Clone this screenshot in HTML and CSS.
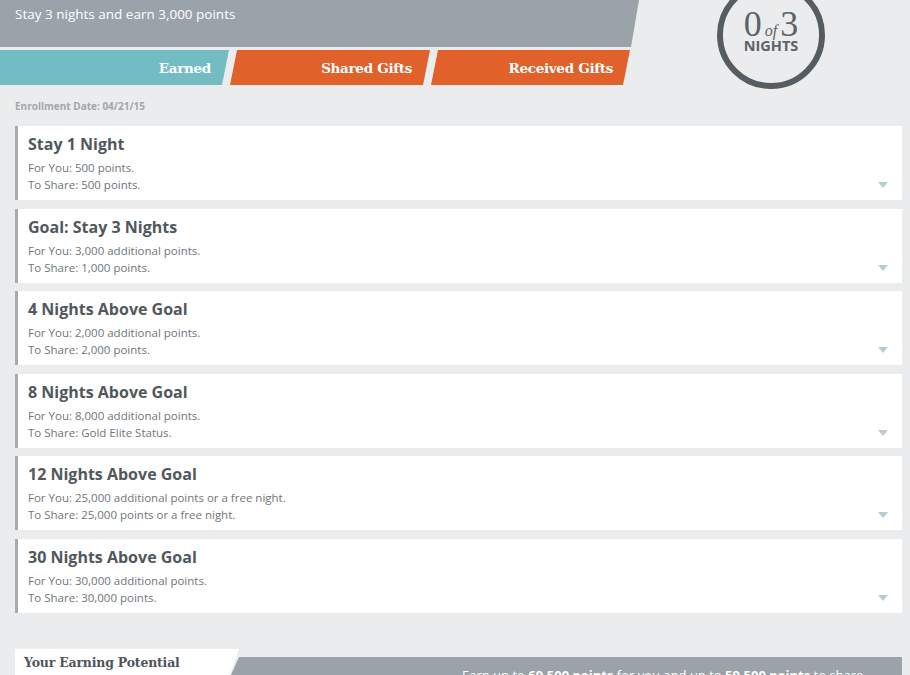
FILE: index.html
```html
<!DOCTYPE html>
<html>
<head>
<meta charset="utf-8">
<link rel="stylesheet" href="styles.css">
</head>
<body>
<div class="page">
  <header class="header">
    <div class="banner">
      <div class="subtitle">Stay 3 nights and earn 3,000 points</div>
    </div>
    <nav class="tabs">
      <div class="tab tab-earned">Earned</div>
      <div class="tab tab-shared">Shared Gifts</div>
      <div class="tab tab-received">Received Gifts</div>
    </nav>
    <div class="badge">
      <div class="badge-count"><span class="num">0</span><span class="of">of</span><span class="num">3</span></div>
      <div class="badge-label">NIGHTS</div>
    </div>
  </header>

  <div class="enroll">Enrollment Date: 04/21/15</div>

  <div class="cards">
    <div class="card">
      <div class="card-title">Stay 1 Night</div>
      <div class="card-line">For You: 500 points.</div>
      <div class="card-line">To Share: 500 points.</div>
      <span class="arrow"></span>
    </div>
    <div class="card">
      <div class="card-title">Goal: Stay 3 Nights</div>
      <div class="card-line">For You: 3,000 additional points.</div>
      <div class="card-line">To Share: 1,000 points.</div>
      <span class="arrow"></span>
    </div>
    <div class="card">
      <div class="card-title">4 Nights Above Goal</div>
      <div class="card-line">For You: 2,000 additional points.</div>
      <div class="card-line">To Share: 2,000 points.</div>
      <span class="arrow"></span>
    </div>
    <div class="card">
      <div class="card-title">8 Nights Above Goal</div>
      <div class="card-line">For You: 8,000 additional points.</div>
      <div class="card-line">To Share: Gold Elite Status.</div>
      <span class="arrow"></span>
    </div>
    <div class="card">
      <div class="card-title">12 Nights Above Goal</div>
      <div class="card-line">For You: 25,000 additional points or a free night.</div>
      <div class="card-line">To Share: 25,000 points or a free night.</div>
      <span class="arrow"></span>
    </div>
    <div class="card">
      <div class="card-title">30 Nights Above Goal</div>
      <div class="card-line">For You: 30,000 additional points.</div>
      <div class="card-line">To Share: 30,000 points.</div>
      <span class="arrow"></span>
    </div>
  </div>

  <section class="potential">
    <div class="potential-tab">Your Earning Potential</div>
    <div class="potential-bar">Earn up to <b>69,500 points</b> for you and up to <b>59,500 points</b> to share</div>
  </section>
</div>
</body>
</html>
```

FILE: styles.css
```css
* { box-sizing: border-box; }
html, body { margin: 0; padding: 0; }
body {
  background: #ebeced;
  font-family: "Open Sans", "Liberation Sans", sans-serif;
  width: 910px;
  height: 675px;
  overflow: hidden;
}
.page { position: relative; }

.header { position: relative; height: 86px; }
.banner {
  height: 47px;
  width: 640px;
  background: #99a3a9;
  clip-path: polygon(0 0, 639px 0, 631px 100%, 0 100%);
  padding: 5px 0 0 15px;
}
.subtitle {
  color: #ffffff;
  font-size: 13.5px;
  line-height: 18px;
  font-weight: 400;
}
.tabs {
  display: flex;
  margin-top: 3px;
  height: 35px;
}
.tab {
  height: 35px;
  color: #ffffff;
  font-family: "DejaVu Serif", "Liberation Serif", serif;
  font-weight: bold;
  font-size: 13.5px;
  line-height: 37px;
  text-align: right;
  letter-spacing: -0.3px;
}
.tab-earned {
  width: 229px;
  background: #74bcc4;
  clip-path: polygon(0 0, 229px 0, 222px 100%, 0 100%);
  padding-right: 18px;
}
.tab-shared {
  width: 202px;
  background: #e0612a;
  clip-path: polygon(8px 0, 201px 0, 194px 100%, 1px 100%);
  padding-right: 19px;
}
.tab-received {
  width: 201px;
  margin-left: -1px;
  background: #e0612a;
  clip-path: polygon(8px 0, 200px 0, 193px 100%, 1px 100%);
  padding-right: 18px;
}

.badge {
  position: absolute;
  left: 717px;
  top: -19px;
  width: 108px;
  height: 108px;
  border: 6px solid #555d62;
  border-radius: 50%;
  display: flex;
  flex-direction: column;
  align-items: center;
  justify-content: flex-end;
  padding-bottom: 30px;
  color: #5b6368;
}
.badge-count {
  font-family: "Liberation Serif", "DejaVu Serif", serif;
  line-height: 35px;
  height: 35px;
  display: flex;
  align-items: baseline;
  margin-bottom: -3px;
}
.badge-count .num { font-size: 36px; }
.badge-count .of { font-size: 16px; font-style: italic; margin: 0 3px; }
.badge-label {
  font-size: 14.5px;
  font-weight: 700;
  line-height: 14px;
}

.enroll {
  margin: 14px 0 0 15px;
  font-size: 10px;
  font-weight: 700;
  color: #a2a7aa;
  line-height: 12px;
}

.cards {
  margin: 14px 8px 0 15px;
  display: flex;
  flex-direction: column;
  gap: 8.6px;
}
.card {
  position: relative;
  height: 74px;
  background: #ffffff;
  border-left: 3px solid #a7abae;
  padding: 7px 0 0 10px;
}
.card-title {
  font-size: 16px;
  font-weight: 700;
  color: #51585c;
  line-height: 22px;
  margin-bottom: 4px;
}
.card-line {
  font-size: 11.5px;
  color: #6f7579;
  line-height: 17px;
  font-weight: 400;
}
.arrow {
  position: absolute;
  right: 14px;
  bottom: 12px;
  width: 0;
  height: 0;
  border-left: 5px solid transparent;
  border-right: 5px solid transparent;
  border-top: 6px solid #b8cbd3;
}

.potential {
  margin: 36px 8px 0 15px;
  display: flex;
  align-items: flex-end;
  height: 26px;
}
.potential-tab {
  width: 224px;
  height: 26px;
  background: #ffffff;
  clip-path: polygon(0 0, 224px 0, 215px 100%, 0 100%);
  font-family: "DejaVu Serif", "Liberation Serif", serif;
  font-weight: bold;
  font-size: 12.5px;
  letter-spacing: -0.2px;
  color: #4f565a;
  padding: 5px 0 0 9px;
  line-height: 18px;
  position: relative;
  z-index: 1;
}
.potential-bar {
  flex: 1;
  height: 18px;
  margin-left: -13px;
  background: #99a3a9;
  clip-path: polygon(13px 0, 100% 0, 100% 100%, 5px 100%);
  color: #ffffff;
  font-size: 13px;
  padding: 10px 0 0 236px;
  line-height: 16px;
  white-space: nowrap;
}
.potential-bar b { font-weight: 700; }
```
